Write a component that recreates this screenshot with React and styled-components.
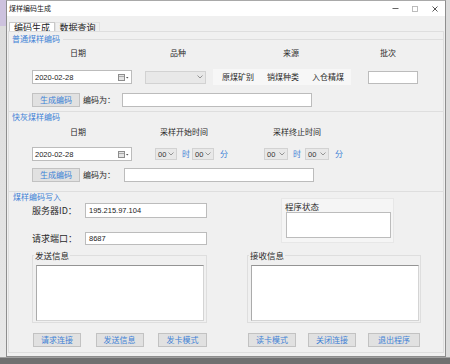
import React from "react";
import styled, { createGlobalStyle } from "styled-components";

const FONT = `"Noto Sans CJK SC", "Noto Sans", sans-serif`;
const BLUE = "#3f82d6";
const LINE = "#dedede";

const Global = createGlobalStyle`
  html, body { margin: 0; padding: 0; }
  body { background: #e4e4e4; font-family: ${FONT}; }
`;

const Screen = styled.div`
  width: 450px;
  height: 364px;
  overflow: hidden;
  display: flex;
  flex-direction: column;
  font-family: ${FONT};
  font-size: 8px;
  color: #2a2a2a;
`;
const TopArea = styled.div`
  display: flex;
  height: 357px;
  flex: none;
`;
const LeftStrip = styled.div`
  width: 6px;
  flex: none;
  background: linear-gradient(#cdc2de 0, #cdc2de 26px, #dcdcdc 26px, #e8e8e8 100%);
`;
const RightStrip = styled.div`
  flex: 1;
  background: #dcdcdc;
`;
const BottomStrip = styled.div`
  flex: 1;
  background: linear-gradient(#a0a0a0 0, #a0a0a0 1px, #707070 1px);
`;
const Window = styled.div`
  width: 440px;
  flex: none;
  box-sizing: border-box;
  border: 1px solid #8e8e8e;
  border-top-color: #a9a9a9;
  display: flex;
  flex-direction: column;
  background: #f0f0f0;
`;
const TitleBar = styled.div`
  height: 15px;
  flex: none;
  background: #fff;
  display: flex;
  align-items: center;
  justify-content: space-between;
  padding-left: 2px;
`;
const TitleText = styled.span`
  font-size: 7px;
  line-height: 15px;
  color: #222;
`;
const Controls = styled.div`
  display: flex;
  height: 15px;
`;
const Ctrl = styled.div`
  width: 20px;
  display: flex;
  align-items: center;
  justify-content: center;
`;
const TabBar = styled.div`
  display: flex;
  margin-top: 6px;
  padding-left: 2px;
  height: 9px;
  flex: none;
`;
const Tab = styled.div`
  width: ${(p) => p.$w}px;
  box-sizing: border-box;
  height: 9px;
  font-size: 9px;
  line-height: 9px;
  text-align: center;
  background: ${(p) => (p.$active ? "#fff" : "#f0f0f0")};
  border: 1px solid ${(p) => (p.$active ? "#c9c9c9" : "#e2e2e2")};
  border-bottom: none;
  color: #222;
`;
const Panel = styled.div`
  flex: 1;
  margin: 0 1px 3px;
  border: 1px solid ${LINE};
  display: flex;
  flex-direction: column;
`;
const Section = styled.div`
  display: flex;
  flex-direction: column;
  border-top: ${(p) => (p.$divider ? `1px solid ${LINE}` : "none")};
  padding-top: ${(p) => p.$pt || 0}px;
  padding-bottom: ${(p) => p.$pb || 0}px;
`;
const SectionTitle = styled.div`
  display: flex;
  align-items: center;
  gap: 3px;
  height: 10px;
  line-height: 10px;
  font-size: 8px;
  color: ${BLUE};
  padding-left: ${(p) => p.$indent}px;
  white-space: nowrap;
  &::after {
    content: "";
    flex: 1;
    border-top: 1px solid ${LINE};
    display: ${(p) => (p.$rule ? "block" : "none")};
  }
`;
const HeaderRow = styled.div`
  display: flex;
  padding-left: 19px;
  height: 10px;
  line-height: 10px;
  margin-top: ${(p) => p.$mt}px;
`;
const HeadCell = styled.div`
  width: ${(p) => p.$w}px;
  flex: none;
  text-align: center;
  white-space: nowrap;
`;
const Row = styled.div`
  display: flex;
  align-items: center;
  padding-left: 23px;
  height: ${(p) => p.$h}px;
  margin-top: ${(p) => p.$mt}px;
`;
const DateBox = styled.div`
  width: 100px;
  height: 14px;
  flex: none;
  box-sizing: border-box;
  background: #fff;
  border: 1px solid #bcbcbc;
  display: flex;
  align-items: center;
  justify-content: space-between;
  padding: 0 2px;
  font-family: "Liberation Sans", sans-serif;
  font-size: 7.5px;
  color: #222;
`;
const Combo = styled.div`
  width: ${(p) => p.$w}px;
  height: ${(p) => p.$h}px;
  margin-left: ${(p) => p.$ml || 0}px;
  flex: none;
  box-sizing: border-box;
  background: #e8e8e8;
  border: 1px solid #d2d2d2;
  display: flex;
  align-items: center;
  justify-content: space-between;
  padding: 0 2px 0 2px;
  font-family: "Liberation Sans", sans-serif;
  font-size: 7.5px;
  color: #333;
`;
const BlueUnit = styled.span`
  color: ${BLUE};
  margin-left: ${(p) => p.$ml}px;
  width: 9px;
  flex: none;
  line-height: 10px;
`;
const SourceBox = styled.div`
  width: 138px;
  height: 16px;
  margin-left: 7px;
  flex: none;
  box-sizing: border-box;
  background: #f7f7f7;
  display: flex;
  align-items: center;
  gap: 11px;
  padding-left: 9px;
`;
const SourceLabel = styled.span`
  width: 34px;
  flex: none;
  white-space: nowrap;
  line-height: 10px;
`;
const TextBox = styled.div`
  width: ${(p) => p.$w}px;
  height: ${(p) => p.$h}px;
  margin-left: ${(p) => p.$ml || 0}px;
  margin-top: ${(p) => p.$mt || 0}px;
  flex: none;
  box-sizing: border-box;
  background: #fff;
  border: 1px solid #bcbcbc;
  display: flex;
  align-items: center;
  padding-left: 3px;
  font-family: "Liberation Sans", sans-serif;
  font-size: 7.5px;
  color: #222;
`;
const Btn = styled.button`
  width: ${(p) => p.$w}px;
  height: 14px;
  flex: none;
  box-sizing: border-box;
  margin: 0;
  padding: 0;
  background: #e1e1e1;
  border: 1px solid #c2c2c2;
  color: ${BLUE};
  font-family: ${FONT};
  font-size: 8px;
  line-height: 12px;
  text-align: center;
`;
const InlineLabel = styled.span`
  width: ${(p) => p.$w}px;
  margin-left: ${(p) => p.$ml || 0}px;
  flex: none;
  white-space: nowrap;
  line-height: 10px;
  font-size: ${(p) => p.$fs || 8}px;
`;
const TopBlock = styled.div`
  display: flex;
  align-items: flex-start;
`;
const LeftCol = styled.div`
  width: 272px;
  flex: none;
  display: flex;
  flex-direction: column;
`;
const StatusGroup = styled.div`
  width: 113px;
  height: 45px;
  margin-top: 6px;
  box-sizing: border-box;
  background: #f5f5f5;
  border: 1px solid #e7e7e7;
  padding: 2px 0 0 3px;
  display: flex;
  flex-direction: column;
`;
const StatusLabel = styled.div`
  font-size: 8.5px;
  line-height: 10px;
  height: 10px;
`;
const Columns = styled.div`
  display: flex;
  margin-top: 5px;
`;
const Column = styled.div`
  width: ${(p) => p.$w}px;
  margin-left: ${(p) => p.$ml}px;
  flex: none;
  display: flex;
  flex-direction: column;
`;
const MsgGroup = styled.fieldset`
  margin: 0;
  padding: 0 2px 1px 3px;
  border: 1px solid ${LINE};
  min-width: 0;
  box-sizing: border-box;
  width: 100%;
`;
const MsgLegend = styled.legend`
  font-size: 8.5px;
  line-height: 10px;
  padding: 0 1px;
  margin-left: -2px;
  color: #2a2a2a;
`;
const MsgArea = styled.div`
  width: 168px;
  height: 56px;
  margin-top: 5px;
  box-sizing: border-box;
  background: #fff;
  border: 1px solid #d4d4d4;
  border-top-color: #939393;
  border-left-color: #ababab;
`;
const ButtonRow = styled.div`
  display: flex;
  justify-content: space-between;
  margin-top: 10px;
  padding: 0 ${(p) => p.$pr || 0}px 0 1px;
`;

const Chevron = () => (
  <svg width="6" height="4" viewBox="0 0 6 4">
    <path d="M0.5 0.5 L3 3 L5.5 0.5" fill="none" stroke="#8a8a8a" strokeWidth="0.9" />
  </svg>
);

const CalendarIcon = () => (
  <svg width="11" height="7" viewBox="0 0 11 7">
    <rect x="0.5" y="0.5" width="6" height="6" fill="#e4e4e4" stroke="#8d8d8d" strokeWidth="1" />
    <line x1="1" y1="2.5" x2="6" y2="2.5" stroke="#9a9a9a" strokeWidth="0.8" />
    <path d="M8 3 L10.5 3 L9.25 4.6 Z" fill="#555" />
  </svg>
);

const DateInput = () => (
  <DateBox>
    <span>2020-02-28</span>
    <CalendarIcon />
  </DateBox>
);

const TimeSelect = ({ w, ml }) => (
  <Combo $w={w} $h={12} $ml={ml}>
    <span>00</span>
    <Chevron />
  </Combo>
);

export default function App() {
  return (
    <>
      <Global />
      <Screen>
        <TopArea>
          <LeftStrip />
          <Window>
            <TitleBar>
              <TitleText>煤样编码生成</TitleText>
              <Controls>
                <Ctrl>
                  <svg width="7" height="7" viewBox="0 0 7 7">
                    <line x1="0.5" y1="3.5" x2="6.5" y2="3.5" stroke="#555" strokeWidth="0.9" />
                  </svg>
                </Ctrl>
                <Ctrl>
                  <svg width="6" height="6" viewBox="0 0 6 6">
                    <rect x="0.5" y="0.5" width="5" height="5" fill="none" stroke="#b5b5b5" strokeWidth="0.9" />
                  </svg>
                </Ctrl>
                <Ctrl>
                  <svg width="6" height="6" viewBox="0 0 6 6">
                    <path d="M0.5 0.5 L5.5 5.5 M5.5 0.5 L0.5 5.5" stroke="#444" strokeWidth="0.9" />
                  </svg>
                </Ctrl>
              </Controls>
            </TitleBar>
            <TabBar>
              <Tab $w={46} $active>编码生成</Tab>
              <Tab $w={45}>数据查询</Tab>
            </TabBar>
            <Panel>
              <Section $pt={2} $pb={4}>
                <SectionTitle $indent={3} $rule>普通煤样编码</SectionTitle>
                <HeaderRow $mt={4}>
                  <HeadCell $w={100}>日期</HeadCell>
                  <HeadCell $w={100}>品种</HeadCell>
                  <HeadCell $w={126}>来源</HeadCell>
                  <HeadCell $w={68}>批次</HeadCell>
                </HeaderRow>
                <Row $h={16} $mt={11}>
                  <DateInput />
                  <Combo $w={61} $h={13} $ml={13}>
                    <span />
                    <Chevron />
                  </Combo>
                  <SourceBox>
                    <SourceLabel>原煤矿别</SourceLabel>
                    <SourceLabel>销煤种类</SourceLabel>
                    <SourceLabel>入仓精煤</SourceLabel>
                  </SourceBox>
                  <TextBox $w={50} $h={13} $ml={17} />
                </Row>
                <Row $h={14} $mt={8}>
                  <Btn $w={48}>生成编码</Btn>
                  <InlineLabel $w={39} $ml={3}>编码为：</InlineLabel>
                  <TextBox $w={190} $h={14} />
                </Row>
              </Section>

              <Section $divider $pb={9}>
                <SectionTitle $indent={3}>快灰煤样编码</SectionTitle>
                <HeaderRow $mt={5}>
                  <HeadCell $w={100}>日期</HeadCell>
                  <HeadCell $w={112}>采样开始时间</HeadCell>
                  <HeadCell $w={114}>采样终止时间</HeadCell>
                </HeaderRow>
                <Row $h={14} $mt={10}>
                  <DateInput />
                  <TimeSelect w={22} ml={23} />
                  <BlueUnit $ml={5}>时</BlueUnit>
                  <TimeSelect w={22} ml={1} />
                  <BlueUnit $ml={6}>分</BlueUnit>
                  <TimeSelect w={24} ml={35} />
                  <BlueUnit $ml={5}>时</BlueUnit>
                  <TimeSelect w={24} ml={3} />
                  <BlueUnit $ml={6}>分</BlueUnit>
                </Row>
                <Row $h={14} $mt={7}>
                  <Btn $w={48}>生成编码</Btn>
                  <InlineLabel $w={41} $ml={3}>编码为：</InlineLabel>
                  <TextBox $w={190} $h={14} />
                </Row>
              </Section>

              <Section $divider>
                <TopBlock>
                  <LeftCol>
                    <SectionTitle $indent={4}>煤样编码写入</SectionTitle>
                    <Row $h={15} $mt={1}>
                      <InlineLabel $w={53} $fs={9}>服务器ID：</InlineLabel>
                      <TextBox $w={122} $h={15}>195.215.97.104</TextBox>
                    </Row>
                    <Row $h={13} $mt={14}>
                      <InlineLabel $w={53} $fs={9}>请求端口：</InlineLabel>
                      <TextBox $w={122} $h={13}>8687</TextBox>
                    </Row>
                  </LeftCol>
                  <StatusGroup>
                    <StatusLabel>程序状态</StatusLabel>
                    <TextBox $w={105} $h={26} $ml={1} $mt={1} />
                  </StatusGroup>
                </TopBlock>
                <Columns>
                  <Column $w={175} $ml={23}>
                    <MsgGroup>
                      <MsgLegend>发送信息</MsgLegend>
                      <MsgArea />
                    </MsgGroup>
                    <ButtonRow>
                      <Btn $w={48}>请求连接</Btn>
                      <Btn $w={48}>发送信息</Btn>
                      <Btn $w={49}>发卡模式</Btn>
                    </ButtonRow>
                  </Column>
                  <Column $w={174} $ml={40}>
                    <MsgGroup>
                      <MsgLegend>接收信息</MsgLegend>
                      <MsgArea />
                    </MsgGroup>
                    <ButtonRow $pr={1}>
                      <Btn $w={48}>读卡模式</Btn>
                      <Btn $w={48}>关闭连接</Btn>
                      <Btn $w={52}>退出程序</Btn>
                    </ButtonRow>
                  </Column>
                </Columns>
              </Section>
            </Panel>
          </Window>
          <RightStrip />
        </TopArea>
        <BottomStrip />
      </Screen>
    </>
  );
}
